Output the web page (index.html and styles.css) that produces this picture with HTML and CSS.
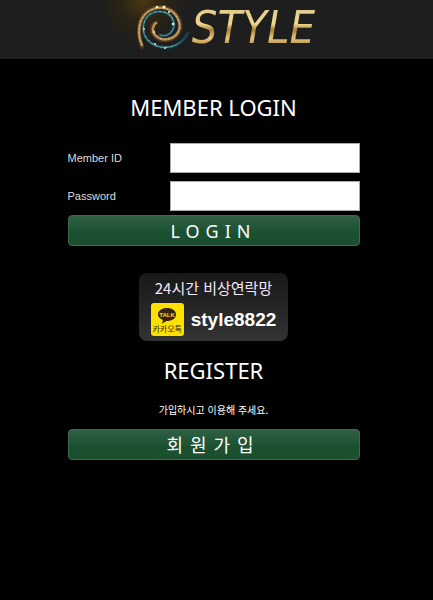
FILE: index.html
```html
<!DOCTYPE html>
<html lang="ko">
<head>
<meta charset="utf-8">
<meta name="viewport" content="width=device-width, initial-scale=1">
<title>STYLE</title>
<link rel="stylesheet" href="styles.css">
</head>
<body>
<header class="site-header">
  <a class="brand" href="#">
    <svg class="swirl" viewBox="120 0 72 56" aria-hidden="true" fill="none" stroke-linecap="round">
      <defs>
        <linearGradient id="gold" x1="0" y1="0" x2="1" y2="1">
          <stop offset="0" stop-color="#ae8549"/><stop offset=".5" stop-color="#b98a55"/><stop offset="1" stop-color="#a98857"/>
        </linearGradient>
        <linearGradient id="teal" x1="0" y1="0" x2="1" y2="0">
          <stop offset="0" stop-color="#397779"/><stop offset=".65" stop-color="#438c91"/><stop offset="1" stop-color="#174052"/>
        </linearGradient>
      </defs>
      <path d="M142 47C137 34 138 18 148 11C158 5 172 6 178 17C184 28 178 38 168 40C158 42 151 34 152 27Q153 24 156 23" stroke="#6a4b2a" stroke-width="4" opacity=".6"/>
      <path d="M142 45C137 34 138 19 148 12C158 5 171 7 177 17C183 28 178 37 168 39C159 41 152 34 153 28Q154 24 156 23" stroke="url(#gold)" stroke-width="2.500"/>
      <path d="M142 45C137 34 138 19 148 12C158 5 171 7 177 17C183 28 178 37 168 39C159 41 152 34 153 28" stroke="#e0b877" stroke-width="1" stroke-dasharray="1 3"/>
      <path d="M160 35C168 38 174 31 174 24C173 14 164 10 155 12C144 15 141 27 145 36C151 47 165 50 176 45Q184 41 188 33" stroke="#15363f" stroke-width="4" opacity=".7"/>
      <path d="M160 35C168 38 174 31 174 24C173 14 164 10 155 12C144 15 141 27 145 36C151 47 165 50 176 45Q184 41 188 33" stroke="url(#teal)" stroke-width="1.600"/>
      <path d="M174 24C173 14 164 10 155 12C144 15 141 27 145 36C151 47 165 50 176 45" stroke="#8fc9c8" stroke-width=".8" stroke-dasharray="1 4"/>
      <g fill="#fff1bd"><circle cx="157" cy="7" r="1.300"/><circle cx="164" cy="7" r="1.600"/><circle cx="169" cy="12" r="1"/><circle cx="154" cy="32" r="1"/></g>
      <g fill="#c9f1ee"><circle cx="173" cy="24" r="1.300"/><circle cx="144" cy="29" r="1"/><circle cx="155" cy="44" r="1"/><circle cx="165" cy="48" r="1"/></g>
    </svg>
    <span class="brand-name">STYLE</span>
  </a>
</header>
<main class="content">
  <h1 class="title">MEMBER LOGIN</h1>
  <form class="login">
    <div class="field">
      <label for="member-id">Member ID</label>
      <input id="member-id" type="text">
    </div>
    <div class="field">
      <label for="password">Password</label>
      <input id="password" type="password">
    </div>
    <button class="button button-login" type="submit">LOGIN</button>
  </form>
  <section class="contact">
    <p class="contact-title">24시간 비상연락망</p>
    <div class="contact-row">
      <div class="kakao">
        <svg class="bubble" viewBox="0 0 20 17" aria-hidden="true">
          <path d="M10 1C5 1 1 3.600 1 7.500C1 10 3 12 6 13L5 16.500L9.500 14C15 14 19 11.500 19 7.500C19 3.600 15 1 10 1Z" fill="#38200f"/>
          <text class="bubble-text" x="10" y="10" text-anchor="middle">TALK</text>
        </svg>
        <span class="kakao-name">카카오톡</span>
      </div>
      <strong class="contact-id">style8822</strong>
    </div>
  </section>
  <section class="register">
    <h2 class="title">REGISTER</h2>
    <p class="register-note">가입하시고 이용해 주세요.</p>
    <button class="button button-register" type="button">회원가입</button>
  </section>
</main>
</body>
</html>
```

FILE: styles.css
```css
* {
  box-sizing: border-box;
}

body {
  margin: 0;
  background: #000;
  color: #fff;
  font-family: "Liberation Sans", "Noto Sans CJK KR", sans-serif;
}

.site-header {
  display: flex;
  justify-content: center;
  height: 59px;
  background: radial-gradient(circle at 143px 0, #4a3710 0, #2b2415 22px, #1e1e1e 44px);
}

.brand {
  display: flex;
  padding-left: 2px;
  color: inherit;
  text-decoration: none;
}

.swirl {
  width: 72px;
  height: 56px;
}

.brand-name {
  background: linear-gradient(#e0cc8a 10px, #f0d78b 24px, #ad8038 30px, #e5c779 38px, #b28a42 46px);
  background-clip: text;
  color: transparent;
  font: italic 45px/56px "DejaVu Sans Condensed", "Liberation Sans Narrow", sans-serif;
}

.content {
  display: flex;
  flex-direction: column;
  align-items: center;
  max-width: 292px;
  margin: 0 auto;
  position: relative;
  right: 3px;
}

.title {
  margin: 0;
  font: 400 22px/32px "Noto Sans", sans-serif;
  text-align: center;
}

.content > .title {
  margin-top: 32px;
}

.login {
  width: 100%;
  margin-top: 20px;
}

.field {
  display: flex;
  align-items: center;
  justify-content: space-between;
  margin-bottom: 8px;
  font: 11px/14px "Liberation Sans", sans-serif;
  color: #ddd;
}

.field input {
  width: 65%;
  height: 30px;
  padding: 4px 8px;
  border: 1px solid #aaa;
  border-radius: 0;
  background: #fff;
}

.field:nth-child(2) {
  margin-bottom: 4px;
}

.button {
  display: block;
  width: 100%;
  height: 31px;
  padding: 0;
  border: 1px solid #3c6b50;
  border-radius: 4px;
  background: linear-gradient(#2f6043, #1a5030 60%, #1a5030);
  color: #fff;
  font: 18px/28px "Noto Sans", "Noto Sans CJK KR", sans-serif;
}

.button-login {
  letter-spacing: 6px;
}

.button-register {
  letter-spacing: 7px;
}

.contact {
  display: flex;
  flex-direction: column;
  align-items: center;
  width: 149px;
  margin-top: 27px;
  padding: 4px 0 5px;
  border-radius: 8px;
  background: linear-gradient(#181818, #333);
}

.contact-title {
  margin: 0;
  color: #f4e8ff;
  font: 15px/22px "Noto Sans CJK KR", sans-serif;
}

.contact-row {
  display: flex;
  align-items: center;
  gap: 7px;
  margin-top: 4px;
}

.kakao {
  display: flex;
  flex-direction: column;
  align-items: center;
  width: 33px;
  height: 33px;
  padding-top: 4px;
  border-radius: 3px;
  background: #fce000;
  color: #38200f;
}

.bubble {
  width: 20px;
  height: 17px;
}

.bubble-text {
  fill: #fce000;
  font: bold 6px "Liberation Sans", sans-serif;
}

.kakao-name {
  font: 8px/10px "Noto Sans CJK KR", sans-serif;
  white-space: nowrap;
}

.contact-id {
  font: bold 19px/24px "Liberation Sans", sans-serif;
}

.register {
  width: 100%;
  margin-top: 13px;
}

.register-note {
  margin: 16px 0 11px;
  font: 10px/16px "Noto Sans CJK KR", sans-serif;
  text-align: center;
}
```
